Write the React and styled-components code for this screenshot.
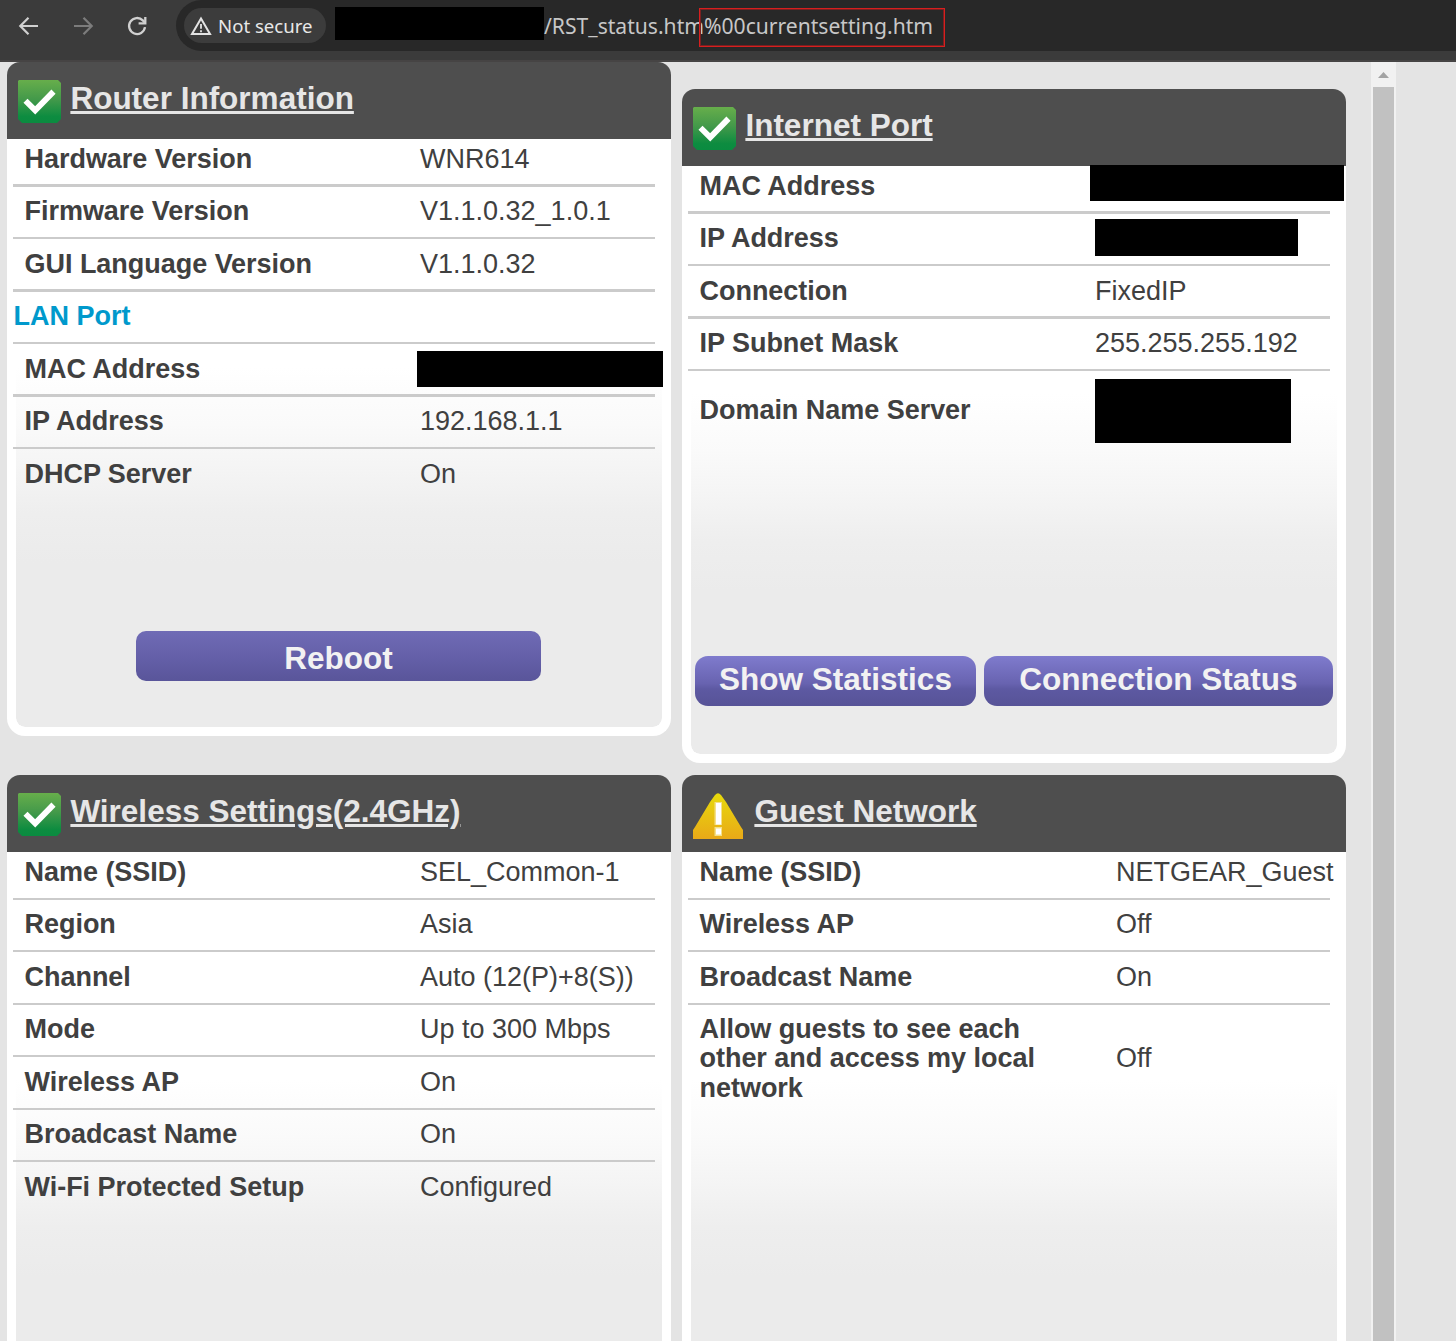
import React from "react";
import styled, { createGlobalStyle, css } from "styled-components";

const GlobalStyle = createGlobalStyle`
  * { box-sizing: border-box; }
  body { margin: 0; background: #e4e4e4; }
`;

const Window = styled.div`
  height: 1341px;
  overflow: hidden;
  display: flex;
  flex-direction: column;
  background: #e4e4e4;
  font-family: "Liberation Sans", Arial, sans-serif;
  color: #404040;
`;

const Toolbar = styled.header`
  flex: none;
  display: flex;
  height: 62px;
  background: #3b3b3b;
  border-bottom: 2px solid #464444;
`;

const NavButtons = styled.nav`
  width: 176px;
  height: 51px;
  display: flex;
  align-items: center;
  padding-left: 15px;
  gap: 26px;
  svg { display: block; flex: none; }
`;

const AddressBar = styled.div`
  flex: 1;
  height: 51px;
  display: flex;
  align-items: center;
  padding-left: 8px;
  background: #282828;
  border-radius: 26px 0 0 26px;
  font-family: "Noto Sans", "Open Sans", sans-serif;
  white-space: nowrap;
`;

const SecurityChip = styled.div`
  width: 142px;
  height: 35px;
  display: flex;
  align-items: center;
  gap: 6px;
  padding-left: 6px;
  border-radius: 18px;
  background: #3c3c3c;
  color: #e8e8e8;
  font-size: 18.6px;
  svg { display: block; flex: none; }
`;

const HostBlock = styled.span`
  width: 209px;
  height: 33px;
  margin: -4px 0 0 9px;
  background: #000;
`;

const UrlPath = styled.span`
  width: 155px;
  margin-top: -1px;
  color: #c7c7c7;
  font-size: 21.1px;
`;

const UrlHighlight = styled.span`
  width: 246px;
  height: 39px;
  margin: 3px 0 0 0;
  padding-left: 4px;
  border: 1.5px solid #d81f1f;
  outline: 1px solid #7a2020;
  outline-offset: -2px;
  color: #c7c7c7;
  font-size: 21.1px;
  line-height: 33px;
`;

const Viewport = styled.div`
  flex: 1;
  min-height: 0;
  display: flex;
`;

const Dashboard = styled.main`
  width: 1371px;
  flex: none;
  display: grid;
  grid-template-columns: 664px 664px;
  grid-template-rows: 701px 674px;
  gap: 12px 11px;
  padding-left: 7px;
`;

const Panel = styled.section`
  height: 674px;
  display: flex;
  flex-direction: column;
  margin-top: ${(p) => p.$drop || 0}px;
`;

const PanelHeader = styled.div`
  flex: none;
  height: 77px;
  display: flex;
  align-items: flex-start;
  gap: ${(p) => p.$gap || 9.4}px;
  padding: 18px 0 0 11px;
  background: #4e4e4e;
  border-radius: 13px 13px 0 0;
  svg { display: block; flex: none; }
`;

const PanelTitle = styled.a`
  color: #e6e6e6;
  font-size: 31.5px;
  line-height: 36px;
  font-weight: bold;
  text-decoration: underline;
  text-decoration-thickness: 3px;
  text-underline-offset: 2px;
`;

const PanelBody = styled.div`
  flex: 1;
  min-height: 0;
  display: flex;
  flex-direction: column;
  border: solid #fff;
  border-width: 0 9px 9px;
  border-radius: 0 0 18px 18px;
  background: linear-gradient(#fff 228px, #fafafa 285px, #f5f5f5 325px, #eee 375px, #ebebeb 425px) padding-box, #fff;
`;

const Rows = styled.div`
  width: 642px;
  margin-left: -3px;
  flex: none;
`;

const Row = styled.div`
  height: ${(p) => p.$height}px;
  display: grid;
  grid-template-columns: ${(p) => p.$valueAt - 17.5}px auto;
  align-items: center;
  align-content: end;
  padding: 0 0 ${(p) => 13 - p.$line}px 11.5px;
  border-bottom: ${(p) => p.$line}px solid #cbcbcb;
  font-size: 27px;
  line-height: 29.5px;
`;

const SectionName = styled(Row)`
  padding-left: 0.5px;
  color: #0099cc;
  font-weight: bold;
`;

const Label = styled.span`
  font-weight: bold;
  max-width: 350px;
  letter-spacing: -0.03px;
`;

const Value = styled.span`
  position: relative;
  height: 29.5px;
  white-space: nowrap;
`;

const Redaction = styled.span`
  position: absolute;
  left: ${(p) => p.$x}px;
  top: ${(p) => p.$y}px;
  width: ${(p) => p.$w}px;
  height: ${(p) => p.$h}px;
  background: #000;
`;

const Actions = styled.div`
  margin-top: auto;
  display: flex;
  ${(p) =>
    p.$center
      ? css`justify-content: center; padding: 0 0 46px 0; margin-left: -1px;`
      : css`gap: 8px; padding: 0 0 48px 4px;`}
`;

const ActionButton = styled.button`
  flex: none;
  width: ${(p) => p.$w}px;
  height: 50px;
  padding: ${(p) => (p.$flat ? "4px 0 0" : "0 0 3px")};
  border: 0;
  border-radius: ${(p) => (p.$flat ? 10 : 13)}px;
  background: ${(p) =>
    p.$flat
      ? "linear-gradient(#6f6bb5, #6560a9 50%, #59559a)"
      : "linear-gradient(#7f7bcd, #6863b0 55%, #5d59a2 66%, #575397)"};
  color: #f2f2f2;
  font: bold 31.5px "Liberation Sans", Arial, sans-serif;
`;

const Scrollbar = styled.div`
  width: 25px;
  flex: none;
  display: flex;
  flex-direction: column;
  align-items: center;
  background: #f1f1f1;
`;

const ScrollArrow = styled.svg`
  display: block;
  width: 25px;
  height: 25px;
  flex: none;
`;

const ScrollThumb = styled.div`
  flex: 1;
  width: 21px;
  background: #c1c1c1;
`;

const Arrow = ({ color, flip }) => (
  <svg width="28" height="28" viewBox="0 0 28 28" fill="none" stroke={color} strokeWidth="2.2">
    <path d={flip ? "M5 14H22M14.5 5.8L22.7 14L14.5 22.2" : "M23 14H6M13.5 5.8L5.3 14L13.5 22.2"} />
  </svg>
);

const Reload = () => (
  <svg width="28" height="28" viewBox="0 0 28 28" fill="none" stroke="#d0d0d0" strokeWidth="2.3">
    <path d="M22 15.2A8 8 0 1 1 19.8 8.4L22 10.8" />
    <path d="M22.3 5V11.4H15.6" />
  </svg>
);

const NotSecureIcon = () => (
  <svg width="22" height="20" viewBox="0 0 22 20">
    <path d="M11 2.6L20 18H2Z" fill="none" stroke="#e3e3e3" strokeWidth="2" />
    <path d="M11 8V12.8M11 14.2V16.2" stroke="#e3e3e3" strokeWidth="1.8" />
  </svg>
);

const CheckIcon = () => (
  <svg width="43" height="43" viewBox="0 0 43 43">
    <defs>
      <linearGradient id="ok" x1="0" y1="0" x2="0" y2="1">
        <stop offset="0" stopColor="#67ae4b" />
        <stop offset="0.45" stopColor="#43994a" />
        <stop offset="0.85" stopColor="#0d8c40" />
        <stop offset="1" stopColor="#0a8b40" />
      </linearGradient>
    </defs>
    <path d="M1 0H40L43 3V39L39 43H4L0 39V1Z" fill="url(#ok)" />
    <path d="M7.5 20.8L17.2 30.3L35.5 11.6" fill="none" stroke="#fff" strokeWidth="5.8" />
  </svg>
);

const WarningIcon = () => (
  <svg width="50" height="46" viewBox="0 0 50 46">
    <defs>
      <linearGradient id="warn" x1="0" y1="0" x2="0" y2="1">
        <stop offset="0" stopColor="#e7da0b" />
        <stop offset="1" stopColor="#e9a918" />
      </linearGradient>
    </defs>
    <path d="M22 2Q25 -1.5 28 2L33 9L48 34L50 37V46H0V37L2 34L17 9Z" fill="url(#warn)" />
    <path d="M21.5 9H29V32H21.5ZM21.5 34H29V43H21.5Z" fill="#f4e08a" />
    <path d="M23 10H28V31.5H23ZM23 35.5H28V41.5H23Z" fill="#fff" />
  </svg>
);

const routerRows = [
  { label: "Hardware Version", value: "WNR614", h: 48, line: 3 },
  { label: "Firmware Version", value: "V1.1.0.32_1.0.1", h: 52, line: 2 },
  { label: "GUI Language Version", value: "V1.1.0.32", h: 53, line: 3 },
  { section: "LAN Port", h: 52, line: 2 },
  { label: "MAC Address", block: { x: -3, y: -3.9, w: 246, h: 36 }, h: 53, line: 3 },
  { label: "IP Address", value: "192.168.1.1", h: 52, line: 2 },
  { label: "DHCP Server", value: "On", h: 53, line: 0 },
];

const internetRows = [
  { label: "MAC Address", block: { x: -5, y: -6.9, w: 254, h: 36 }, h: 48, line: 3 },
  { label: "IP Address", block: { x: 0, y: -4.9, w: 203, h: 37 }, h: 52, line: 2 },
  { label: "Connection", value: "FixedIP", h: 53, line: 3 },
  { label: "IP Subnet Mask", value: "255.255.255.192", h: 52, line: 2 },
  { label: "Domain Name Server", block: { x: 0, y: -16.9, w: 196, h: 64 }, h: 67, line: 0 },
];

const wirelessRows = [
  { label: "Name (SSID)", value: "SEL_Common-1", h: 48, line: 2 },
  { label: "Region", value: "Asia", h: 52, line: 2 },
  { label: "Channel", value: "Auto (12(P)+8(S))", h: 53, line: 2 },
  { label: "Mode", value: "Up to 300 Mbps", h: 52, line: 2 },
  { label: "Wireless AP", value: "On", h: 53, line: 2 },
  { label: "Broadcast Name", value: "On", h: 52, line: 2 },
  { label: "Wi-Fi Protected Setup", value: "Configured", h: 53, line: 0 },
];

const guestRows = [
  { label: "Name (SSID)", value: "NETGEAR_Guest", h: 48, line: 2 },
  { label: "Wireless AP", value: "Off", h: 52, line: 2 },
  { label: "Broadcast Name", value: "On", h: 53, line: 2 },
  { label: "Allow guests to see each other and access my local network", value: "Off", h: 111.4, line: 0 },
];

function InfoPanel({ title, icon, rows, drop, gap, valueAt = 413, children }) {
  return (
    <Panel $drop={drop}>
      <PanelHeader $gap={gap}>
        {icon}
        <PanelTitle>{title}</PanelTitle>
      </PanelHeader>
      <PanelBody>
        <Rows>
          {rows.map((r) =>
            r.section ? (
              <SectionName key={r.section} $height={r.h} $line={r.line} $valueAt={valueAt}>
                {r.section}
              </SectionName>
            ) : (
              <Row key={r.label} $height={r.h} $line={r.line} $valueAt={valueAt}>
                <Label>{r.label}</Label>
                <Value>
                  {r.value}
                  {r.block && (
                    <Redaction $x={r.block.x} $y={r.block.y} $w={r.block.w} $h={r.block.h} />
                  )}
                </Value>
              </Row>
            )
          )}
        </Rows>
        {children}
      </PanelBody>
    </Panel>
  );
}

export default function App() {
  return (
    <Window>
      <GlobalStyle />
      <Toolbar>
        <NavButtons>
          <Arrow color="#d0d0d0" />
          <Arrow color="#7c7c7c" flip />
          <Reload />
        </NavButtons>
        <AddressBar>
          <SecurityChip>
            <NotSecureIcon />
            Not secure
          </SecurityChip>
          <HostBlock />
          <UrlPath>/RST_status.htm</UrlPath>
          <UrlHighlight>%00currentsetting.htm</UrlHighlight>
        </AddressBar>
      </Toolbar>
      <Viewport>
        <Dashboard>
          <InfoPanel title="Router Information" icon={<CheckIcon />} rows={routerRows}>
            <Actions $center>
              <ActionButton $flat $w={405}>Reboot</ActionButton>
            </Actions>
          </InfoPanel>
          <InfoPanel title="Internet Port" icon={<CheckIcon />} rows={internetRows} drop={27}>
            <Actions>
              <ActionButton $w={281}>Show Statistics</ActionButton>
              <ActionButton $w={349}>Connection Status</ActionButton>
            </Actions>
          </InfoPanel>
          <InfoPanel title="Wireless Settings(2.4GHz)" icon={<CheckIcon />} rows={wirelessRows} />
          <InfoPanel
            title="Guest Network"
            icon={<WarningIcon />}
            rows={guestRows}
            gap={11.4}
            valueAt={434}
          />
        </Dashboard>
        <Scrollbar>
          <ScrollArrow viewBox="0 0 25 25">
            <path d="M7 16L12.5 10L18 16Z" fill="#a3a3a3" />
          </ScrollArrow>
          <ScrollThumb />
        </Scrollbar>
      </Viewport>
    </Window>
  );
}
